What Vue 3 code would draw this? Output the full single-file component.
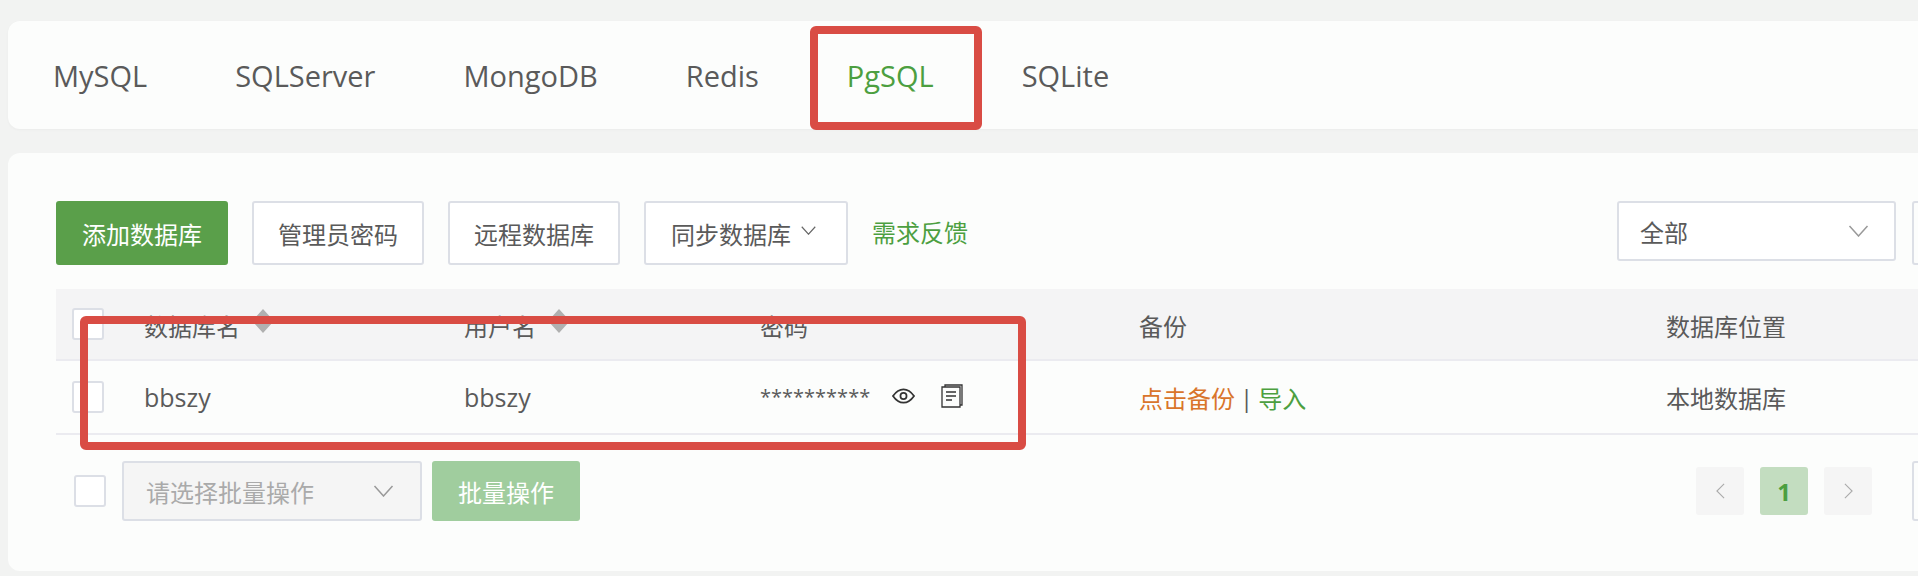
<script setup>
const tabs = ['MySQL', 'SQLServer', 'MongoDB', 'Redis', 'PgSQL', 'SQLite']
</script>

<template>
  <div class="page">
    <nav class="card tabs">
      <span v-for="t in tabs" :key="t" class="tab" :class="{ on: t === 'PgSQL' }">{{ t }}</span>
    </nav>

    <section class="card panel">
      <div class="toolbar">
        <button class="btn primary">添加数据库</button>
        <button class="btn">管理员密码</button>
        <button class="btn">远程数据库</button>
        <button class="btn sync">
          同步数据库
          <svg class="chev small" viewBox="0 0 20 12"><path d="M1 1l9 10 9-10" /></svg>
        </button>
        <a class="feedback">需求反馈</a>
        <div class="spacer"></div>
        <div class="select all">
          <span>全部</span>
          <svg class="chev" viewBox="0 0 20 12"><path d="M1 1l9 10 9-10" /></svg>
        </div>
        <div class="stub tall"></div>
      </div>

      <div class="row head">
        <div class="cell"><i class="check"></i></div>
        <div class="cell text">数据库名<svg class="sort" viewBox="0 0 22 24"><path d="M11 0l10 11H1zM11 24l10-11H1z" /></svg></div>
        <div class="cell text">用户名<svg class="sort" viewBox="0 0 22 24"><path d="M11 0l10 11H1zM11 24l10-11H1z" /></svg></div>
        <div class="cell text">密码</div>
        <div class="cell text">备份</div>
        <div class="cell text">数据库位置</div>
      </div>
      <div class="row body">
        <div class="cell"><i class="check"></i></div>
        <div class="cell text latin">bbszy</div>
        <div class="cell text latin">bbszy</div>
        <div class="cell pw">
          <span class="stars">**********</span>
          <svg class="eye" viewBox="0 0 24 16">
            <path d="M1 8C4.500 3 8 1 12 1s7.500 2 11 7c-3.500 5-7 7-11 7S4.500 13 1 8z" />
            <circle cx="12" cy="8" r="3.200" />
          </svg>
          <svg class="doc" viewBox="0 0 22 24">
            <path d="M4 3V1h17v20h-2" />
            <path d="M1 3h18v20H1z" />
            <path d="M5 8h10M5 12h10M5 16h6" />
          </svg>
        </div>
        <div class="cell text"><span class="orange">点击备份</span><span class="bar">|</span><span class="green">导入</span></div>
        <div class="cell text">本地数据库</div>
      </div>

      <div class="footer">
        <i class="check"></i>
        <div class="select batch">
          <span>请选择批量操作</span>
          <svg class="chev" viewBox="0 0 20 12"><path d="M1 1l9 10 9-10" /></svg>
        </div>
        <button class="btn batch-btn">批量操作</button>
        <div class="spacer"></div>
        <span class="pg">
          <svg viewBox="0 0 10 18"><path d="M9 1L1 9l8 8" /></svg>
        </span>
        <span class="pg cur">1</span>
        <span class="pg">
          <svg viewBox="0 0 10 18"><path d="M1 1l8 8-8 8" /></svg>
        </span>
        <div class="stub short"></div>
      </div>
    </section>

    <div class="mark mark-tab"></div>
    <div class="mark mark-row"></div>
  </div>
</template>

<style>
html, body { margin: 0; padding: 0; overflow: hidden; }
</style>

<style scoped>
.page {
  position: relative;
  box-sizing: border-box;
  width: 1918px;
  height: 576px;
  padding: 21px 0 0 8px;
  overflow: hidden;
  background: #f2f3f2;
  font-family: "Open Sans", "Noto Sans CJK SC", sans-serif;
  font-size: 24px;
  color: #5a5a5a;
}
.card {
  background: #fcfdfc;
  border-radius: 12px 0 0 12px;
}
.tabs {
  display: flex;
  align-items: center;
  height: 108px;
  padding-left: 45px;
  margin-bottom: 24px;
  font-size: 29px;
  box-shadow: 0 1px 3px rgba(0, 0, 0, 0.03);
}
.tab { margin-right: 88px; }
.tab.on { color: #4c9f40; }

.panel {
  box-sizing: border-box;
  height: 418px;
  padding: 48px 0 0 48px;
}
.toolbar {
  display: flex;
  align-items: flex-start;
  height: 88px;
}
.spacer { flex: 1; }
.btn {
  box-sizing: border-box;
  width: 172px;
  height: 64px;
  margin-right: 24px;
  padding: 0;
  border: 2px solid #dcdfe6;
  border-radius: 3px;
  background: #fff;
  color: #5a5a5a;
  font: inherit;
}
.btn.primary {
  border-color: #5a9f4a;
  background: #5a9f4a;
  color: #fff;
}
.btn.sync { width: 204px; display: flex; align-items: center; padding-left: 25px; gap: 10px; }
.feedback { color: #4c9f40; line-height: 63px; }
.select {
  box-sizing: border-box;
  display: flex;
  align-items: center;
  justify-content: space-between;
  height: 60px;
  border: 2px solid #dcdfe6;
  border-radius: 3px;
  background: #fff;
}
.select.all { width: 279px; margin-right: 16px; padding: 0 25px 0 21px; }
.select.batch {
  width: 300px;
  margin-left: 16px;
  padding: 0 26px 0 22px;
  background: #f5f5f5;
  color: #aaa;
}
.stub {
  box-sizing: border-box;
  width: 40px;
  margin-right: -34px;
  border: 2px solid #dcdfe6;
  border-radius: 3px;
}
.stub.tall { height: 64px; }
.stub.short { height: 60px; margin-left: 40px; }
.chev { width: 21px; height: 12px; flex: none; fill: none; stroke: #999; stroke-width: 1.500; }
.chev.small { width: 15px; height: 9px; margin-top: -6px; stroke: #666; }

.row {
  display: grid;
  grid-template-columns: 88px 320px 296px 379px 527px 1fr;
  align-items: center;
  border-bottom: 2px solid #ebebf0;
}
.row.head { height: 70px; background: #f4f4f5; }
.row.body { height: 72px; }
.cell { display: flex; align-items: center; }
.row .cell:first-child { padding-left: 16px; }
.head .text { padding-top: 2px; }
.latin { font-size: 25px; }
.check {
  display: block;
  box-sizing: border-box;
  width: 32px;
  height: 32px;
  border: 2px solid #dcdfe6;
  border-radius: 3px;
  background: #fff;
}
.sort { width: 22px; height: 26px; margin-left: 12px; margin-top: -9px; fill: #b0b0b0; }
.pw { padding-bottom: 2px; }
.stars { font-size: 20px; letter-spacing: 0; width: 132px; }
.eye { width: 23px; height: 16px; fill: none; stroke: #333; stroke-width: 1.800; }
.doc { width: 22px; height: 24px; margin-left: 26px; fill: none; stroke: #333; stroke-width: 1.300; }
.orange { color: #d9752b; }
.green { color: #4c9f40; }
.bar { margin: 0 5px; }

.footer {
  display: flex;
  align-items: center;
  height: 60px;
  margin-top: 26px;
  padding-left: 18px;
}
.batch-btn {
  width: 148px;
  height: 60px;
  margin: 0 0 0 10px;
  border: none;
  background: #a0cd9e;
  color: #fff;
}
.pg {
  display: flex;
  align-items: center;
  justify-content: center;
  width: 48px;
  height: 48px;
  margin-right: 16px;
  border-radius: 3px;
  background: #f5f5f5;
}
.pg svg { width: 9px; height: 18px; fill: none; stroke: #aaa; stroke-width: 1.200; }
.pg.cur { background: #c3ddc0; color: #4c9f40; font-weight: 700; }
.pg:last-of-type { margin-right: 0; }

.mark {
  position: absolute;
  box-sizing: border-box;
  border: 8px solid #d94c44;
  border-radius: 6px;
  pointer-events: none;
}
.mark-tab { left: 810px; top: 26px; width: 172px; height: 104px; }
.mark-row { left: 80px; top: 316px; width: 946px; height: 134px; }
</style>
